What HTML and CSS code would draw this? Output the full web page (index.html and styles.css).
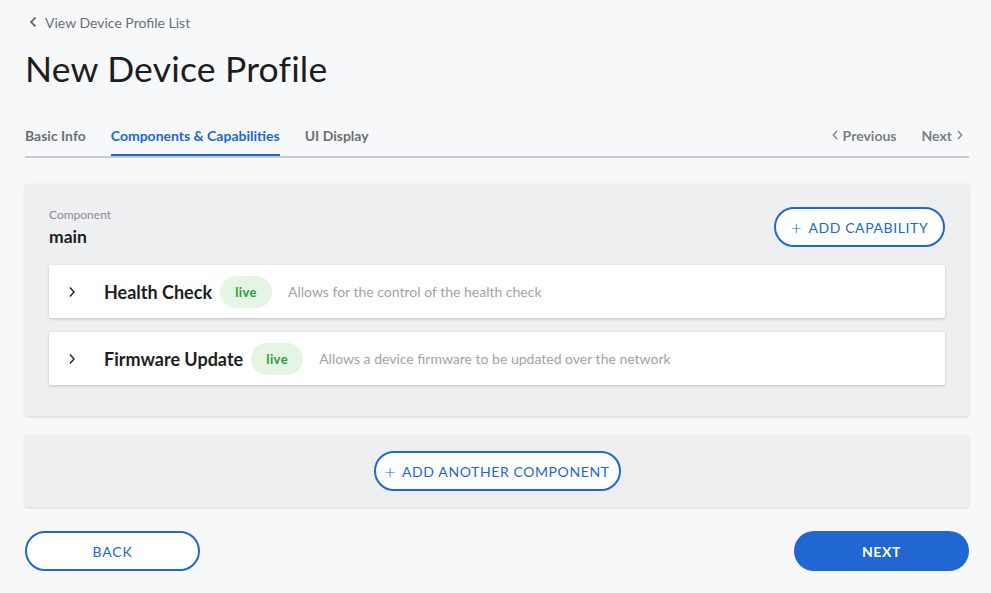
FILE: index.html
```html
<!DOCTYPE html>
<html>
<head>
<meta charset="utf-8">
<link rel="stylesheet" href="styles.css">
</head>
<body>
<div class="page">
  <a class="backlink" href="#">
    <svg width="8" height="12" viewBox="0 0 8 12"><path d="M6.5 1.5 L2 6 L6.5 10.5" fill="none" stroke="#6b6f76" stroke-width="1.8"/></svg>
    <span>View Device Profile List</span>
  </a>
  <h1 class="title">New Device Profile</h1>
  <div class="tabs">
    <div class="tab-list">
      <div class="tab">Basic Info</div>
      <div class="tab active">Components &amp; Capabilities</div>
      <div class="tab">UI Display</div>
    </div>
    <div class="pager">
      <span class="pg"><svg width="6" height="10" viewBox="0 0 6 10"><path d="M5 1 L1.3 5 L5 9" fill="none" stroke="#7b7f86" stroke-width="1.3"/></svg>Previous</span>
      <span class="pg">Next<svg width="6" height="10" viewBox="0 0 6 10"><path d="M1 1 L4.7 5 L1 9" fill="none" stroke="#7b7f86" stroke-width="1.3"/></svg></span>
    </div>
  </div>

  <div class="card comp">
    <div class="comp-head">
      <div>
        <div class="label">Component</div>
        <div class="name">main</div>
      </div>
      <button class="btn-outline add-cap"><span class="plus">+</span>ADD CAPABILITY</button>
    </div>
    <div class="caps">
      <div class="cap">
        <svg class="chev" width="8" height="12" viewBox="0 0 8 12"><path d="M2 1.5 L6 6 L2 10.5" fill="none" stroke="#222" stroke-width="1.4"/></svg>
        <span class="cap-title">Health Check</span>
        <span class="badge">live</span>
        <span class="desc">Allows for the control of the health check</span>
      </div>
      <div class="cap">
        <svg class="chev" width="8" height="12" viewBox="0 0 8 12"><path d="M2 1.5 L6 6 L2 10.5" fill="none" stroke="#222" stroke-width="1.4"/></svg>
        <span class="cap-title">Firmware Update</span>
        <span class="badge">live</span>
        <span class="desc">Allows a device firmware to be updated over the network</span>
      </div>
    </div>
  </div>

  <div class="card addcomp">
    <button class="btn-outline add-comp"><span class="plus">+</span>ADD ANOTHER COMPONENT</button>
  </div>

  <div class="footer">
    <button class="btn-outline foot-btn">BACK</button>
    <button class="btn-solid foot-btn">NEXT</button>
  </div>
</div>
</body>
</html>
```
FILE: styles.css
```css
* { box-sizing: border-box; }
html, body { margin: 0; padding: 0; }
body {
  background: #f7f8fa;
  font-family: "Lato", "Noto Sans", sans-serif;
  color: #1d1d1f;
  width: 991px;
  height: 593px;
  overflow: hidden;
}
.page { padding: 13px 22px 0 25px; }
.backlink {
  display: flex; align-items: center; gap: 8px;
  color: #6b6f76; text-decoration: none; font-size: 14px;
  margin-left: 4px; height: 18px;
}
.title {
  margin: 18px 0 0 0;
  font-size: 35.5px; font-weight: 400; line-height: 40px;
  color: #1d1d1f; letter-spacing: 0.2px;
}
.tabs {
  margin-top: 31px;
  display: flex; justify-content: space-between; align-items: flex-end;
  border-bottom: 2px solid #c9cacd;
  height: 38px;
}
.tab-list { display: flex; gap: 25px; height: 100%; }
.tab {
  font-size: 14px; color: #6b6f76; font-weight: 700;
  display: flex; align-items: center; height: 100%;
  padding-bottom: 4px;
  margin-bottom: -2px;
  border-bottom: 2px solid transparent;
}
.tab.active { color: #2167d1; border-bottom-color: #2167d1; }
.pager { display: flex; gap: 25px; height: 100%; align-items: center; padding-bottom: 6px; padding-right: 6px; }
.pg { display: flex; align-items: center; gap: 5px; font-size: 14px; color: #7b7f86; font-weight: 700; }

.card {
  background: #eeeff1;
  border-radius: 3px;
  box-shadow: 0 1px 3px rgba(0,0,0,0.14);
}
.comp { margin-top: 26px; padding: 23px 24px 31px 24px; }
.comp-head { display: flex; justify-content: space-between; align-items: flex-start; }
.label { font-size: 12px; color: #8b8e93; line-height: 16px; }
.name { font-size: 17.5px; color: #1d1d1f; font-weight: 700; line-height: 22px; margin-top: 3px; }
.btn-outline {
  background: #fff; border: 2px solid #2167d1; color: #2167d1;
  border-radius: 20px; font-family: inherit; font-size: 14px;
  letter-spacing: 0.6px; display: flex; align-items: center; justify-content: center;
  cursor: pointer;
}
.plus { font-size: 19px; font-weight: 300; margin-right: 6px; line-height: 1; }
.add-cap { width: 171px; height: 40px; margin-top: 0; }
.caps { display: flex; flex-direction: column; gap: 14px; margin-top: 17px; }
.cap {
  background: #fff; height: 53px; border-radius: 2px;
  box-shadow: 0 1px 3px rgba(0,0,0,0.2);
  display: flex; align-items: center; padding-left: 19px;
}
.chev { margin-right: 28px; }
.cap-title { font-size: 18px; font-weight: 700; color: #1d1d1f; margin-right: 8px; }
.badge {
  background: #e5f4e3; color: #2b9c3b; font-size: 13px; font-weight: 700;
  border-radius: 16px; width: 52px; height: 32px;
  display: flex; align-items: center; justify-content: center;
  margin-right: 16px; letter-spacing: 0.4px;
}
.desc { font-size: 14px; color: #a0a3a8; }

.addcomp { margin-top: 19px; height: 72px; display: flex; align-items: center; justify-content: center; }
.add-comp { width: 247px; height: 40px; }

.footer { margin-top: 24px; display: flex; justify-content: space-between; }
.foot-btn { width: 175px; height: 40px; }
.btn-solid {
  background: #2167d1; color: #fff; border: none; border-radius: 20px;
  font-family: inherit; font-size: 14px; font-weight: 700; letter-spacing: 0.6px;
}
.footer .btn-outline { letter-spacing: 0.8px; }
```
